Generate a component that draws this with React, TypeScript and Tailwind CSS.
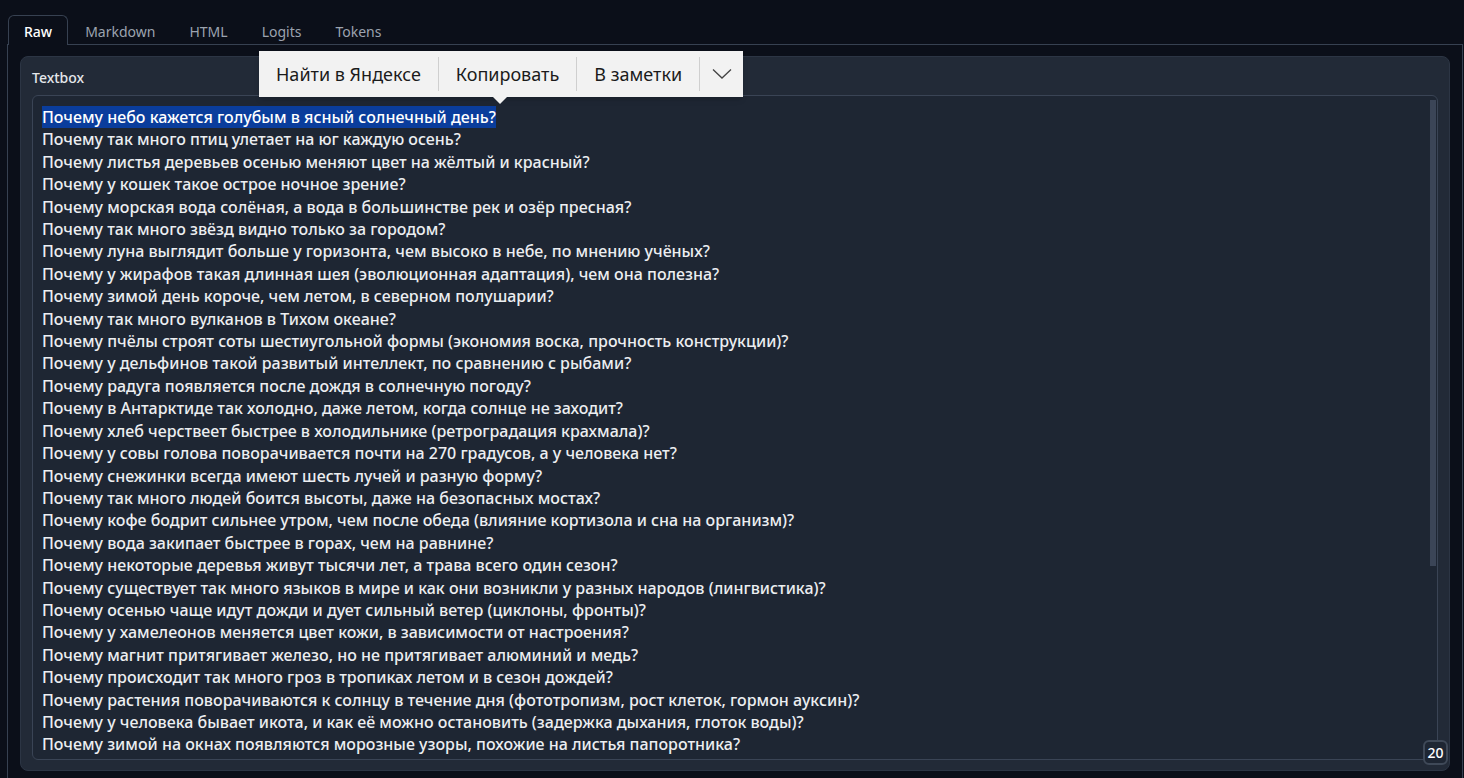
import React from "react";

const lines: string[] = [
  "Почему небо кажется голубым в ясный солнечный день?",
  "Почему так много птиц улетает на юг каждую осень?",
  "Почему листья деревьев осенью меняют цвет на жёлтый и красный?",
  "Почему у кошек такое острое ночное зрение?",
  "Почему морская вода солёная, а вода в большинстве рек и озёр пресная?",
  "Почему так много звёзд видно только за городом?",
  "Почему луна выглядит больше у горизонта, чем высоко в небе, по мнению учёных?",
  "Почему у жирафов такая длинная шея (эволюционная адаптация), чем она полезна?",
  "Почему зимой день короче, чем летом, в северном полушарии?",
  "Почему так много вулканов в Тихом океане?",
  "Почему пчёлы строят соты шестиугольной формы (экономия воска, прочность конструкции)?",
  "Почему у дельфинов такой развитый интеллект, по сравнению с рыбами?",
  "Почему радуга появляется после дождя в солнечную погоду?",
  "Почему в Антарктиде так холодно, даже летом, когда солнце не заходит?",
  "Почему хлеб черствеет быстрее в холодильнике (ретроградация крахмала)?",
  "Почему у совы голова поворачивается почти на 270 градусов, а у человека нет?",
  "Почему снежинки всегда имеют шесть лучей и разную форму?",
  "Почему так много людей боится высоты, даже на безопасных мостах?",
  "Почему кофе бодрит сильнее утром, чем после обеда (влияние кортизола и сна на организм)?",
  "Почему вода закипает быстрее в горах, чем на равнине?",
  "Почему некоторые деревья живут тысячи лет, а трава всего один сезон?",
  "Почему существует так много языков в мире и как они возникли у разных народов (лингвистика)?",
  "Почему осенью чаще идут дожди и дует сильный ветер (циклоны, фронты)?",
  "Почему у хамелеонов меняется цвет кожи, в зависимости от настроения?",
  "Почему магнит притягивает железо, но не притягивает алюминий и медь?",
  "Почему происходит так много гроз в тропиках летом и в сезон дождей?",
  "Почему растения поворачиваются к солнцу в течение дня (фототропизм, рост клеток, гормон ауксин)?",
  "Почему у человека бывает икота, и как её можно остановить (задержка дыхания, глоток воды)?",
  "Почему зимой на окнах появляются морозные узоры, похожие на листья папоротника?",
];

const tabs = ["Raw", "Markdown", "HTML", "Logits", "Tokens"];

export default function App() {
  return (
    <div
      className="relative h-[778px] w-full overflow-hidden bg-[#0b0f19] pt-[16px] pl-[7px] pr-[1px]"
      style={{ fontFamily: '"Noto Sans", "Open Sans", sans-serif' }}
    >
      {/* tab bar */}
      <div className="flex h-[29px] items-end border-b border-[#374151] pl-px">
        {tabs.map((t, i) =>
          i === 0 ? (
            <div
              key={t}
              className="-mb-px flex h-[30px] items-center rounded-t-md border border-b-0 border-[#374151] bg-[#0b0f19] px-[15px] pt-[2px] text-[14px] font-medium text-white"
            >
              {t}
            </div>
          ) : (
            <div
              key={t}
              className="flex h-[29px] items-center px-[17px] pt-[4px] text-[14px] text-[#9ca3af]"
            >
              {t}
            </div>
          )
        )}
      </div>

      {/* tab content */}
      <div className="h-[740px] border-x border-[#374151] px-[12px] pt-[11px]">
        <div className="relative h-[715px] rounded-lg border border-[#2c3544] bg-[#222a37] p-[11px]">
          <div className="mb-[7px] text-[14px] font-medium leading-[20px] text-[#e5e7eb]">Textbox</div>
          <div className="relative h-[665px] overflow-hidden rounded-md border border-[#3a4455] bg-[#1e2633] pl-[9px] pt-[10px]">
            {lines.map((l, i) => (
              <div
                key={i}
                className="whitespace-nowrap text-[16px] font-medium leading-[22.4px] text-[#eceef1]"
              >
                {i === 0 ? <span className="bg-[#0a3d9c] text-white">{l}</span> : l}
              </div>
            ))}
            {/* scrollbar */}
            <div className="absolute right-[1px] top-[4px] h-[466px] w-[6px] bg-[#3b4557]" />
          </div>
          {/* counter badge */}
          <div className="absolute bottom-[5px] right-[1px] flex h-[25px] w-[25px] items-center justify-center rounded-md border-2 border-[#3f4958] bg-[#1e2633] text-[14px] font-medium text-white">
            20
          </div>
        </div>
      </div>

      {/* context popup */}
      <div className="absolute left-[259px] top-[51px] flex h-[46px] items-center bg-[#f2f2f2] text-[18px] text-[#1b1b1b] shadow-md">
        <div className="px-[17px]">Найти в Яндексе</div>
        <div className="h-[34px] w-px bg-[#cfcfcf]" />
        <div className="px-[17px]">Копировать</div>
        <div className="h-[34px] w-px bg-[#cfcfcf]" />
        <div className="px-[17px]">В заметки</div>
        <div className="h-[34px] w-px bg-[#cfcfcf]" />
        <div className="flex w-[43px] items-center justify-center">
          <svg width="20" height="12" viewBox="0 0 20 12" fill="none">
            <path d="M1 1.5 L10 10 L19 1.5" stroke="#444" strokeWidth="1.3" />
          </svg>
        </div>
        <div className="absolute left-[233px] top-[45px] h-0 w-0 border-x-[8px] border-t-[8px] border-x-transparent border-t-[#f2f2f2]" />
      </div>
    </div>
  );
}
